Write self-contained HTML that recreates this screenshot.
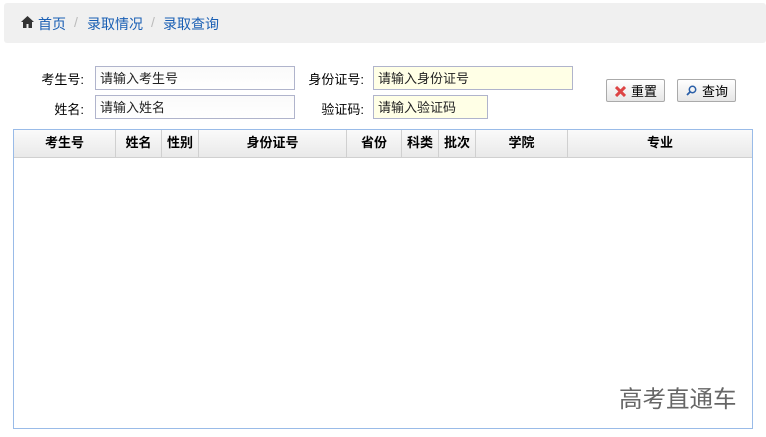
<!DOCTYPE html>
<html><head><meta charset="utf-8"><style>
body{margin:0;width:766px;height:437px;background:#fff;font-family:"Liberation Sans","Noto Sans CJK SC",sans-serif;font-size:13px;color:#000;position:relative;overflow:hidden}
.bc{position:absolute;left:4px;top:3px;width:762px;height:40px;background:#f0f0f0;border-radius:3px}
.bc span{position:absolute;top:11px;font-size:14px;color:#1a5fb4}
.sep{color:#bbb!important}
.lab{position:absolute;font-size:13px;text-align:right}
.inp{position:absolute;box-sizing:border-box;height:24px;border:1px solid #b0b4cc;padding:1px 4px;font-size:13px;color:#222;background:linear-gradient(#fafafa,#fff)}
.y{background:#ffffe6}
.btn{position:absolute;top:79px;height:23px;box-sizing:border-box;border:1px solid #aaa;border-radius:2px;background:linear-gradient(#fff,#e6e6e6);font-size:13px;padding:1px 0 0 24px}
.tbl{position:absolute;left:13px;top:129px;width:738px;height:298px;border:1px solid #99bbe8}
.hd{position:absolute;left:0;top:0;width:738px;height:27px;background:linear-gradient(#fafafa,#e9e9e9);border-bottom:1px solid #d0d0d0}
.c{position:absolute;top:0;height:27px;line-height:26px;text-align:center;font-weight:bold;font-size:13px;border-right:1px solid #d0d0d0;box-sizing:border-box}
.wm{position:absolute;left:619px;top:380px;font-size:23.5px;color:#666}
</style></head><body>
<div class="bc">
<svg style="position:absolute;left:17px;top:13px" width="13" height="12" viewBox="0 0 13 12"><path d="M6.5 0L0 6h2v6h3.5V8h2v4H11V6h2z" fill="#333"/></svg>
<span style="left:34px">首页</span><span class="sep" style="left:70px">/</span>
<span style="left:83px">录取情况</span><span class="sep" style="left:147px">/</span>
<span style="left:159px">录取查询</span>
</div>
<div class="lab" style="left:20px;top:69px;width:64px">考生号:</div>
<div class="inp" style="left:95px;top:66px;width:200px">请输入考生号</div>
<div class="lab" style="left:20px;top:99px;width:64px">姓名:</div>
<div class="inp" style="left:95px;top:95px;width:200px">请输入姓名</div>
<div class="lab" style="left:300px;top:69px;width:64px">身份证号:</div>
<div class="inp y" style="left:373px;top:66px;width:200px">请输入身份证号</div>
<div class="lab" style="left:300px;top:99px;width:64px">验证码:</div>
<div class="inp y" style="left:373px;top:95px;width:115px">请输入验证码</div>
<div class="btn" style="left:606px;width:59px"><svg style="position:absolute;left:8px;top:6px" width="11" height="11" viewBox="0 0 11 11"><path d="M1 1L10 10M10 1L1 10" stroke="#d44" stroke-width="3"/></svg>重置</div>
<div class="btn" style="left:677px;width:59px"><svg style="position:absolute;left:8px;top:5px" width="11" height="11" viewBox="0 0 11 11"><circle cx="6.5" cy="4.5" r="3.2" fill="none" stroke="#2a5fa8" stroke-width="1.5"/><path d="M4.2 6.8L1 10" stroke="#2a5fa8" stroke-width="1.8"/></svg>查询</div>
<div class="tbl"><div class="hd">
<div class="c" style="left:0;width:102px">考生号</div>
<div class="c" style="left:102px;width:46px">姓名</div>
<div class="c" style="left:148px;width:37px">性别</div>
<div class="c" style="left:185px;width:148px">身份证号</div>
<div class="c" style="left:333px;width:55px">省份</div>
<div class="c" style="left:388px;width:37px">科类</div>
<div class="c" style="left:425px;width:37px">批次</div>
<div class="c" style="left:462px;width:92px">学院</div>
<div class="c" style="left:554px;width:184px;border-right:none">专业</div>
</div></div>
<div class="wm">高考直通车</div>
</body></html>
